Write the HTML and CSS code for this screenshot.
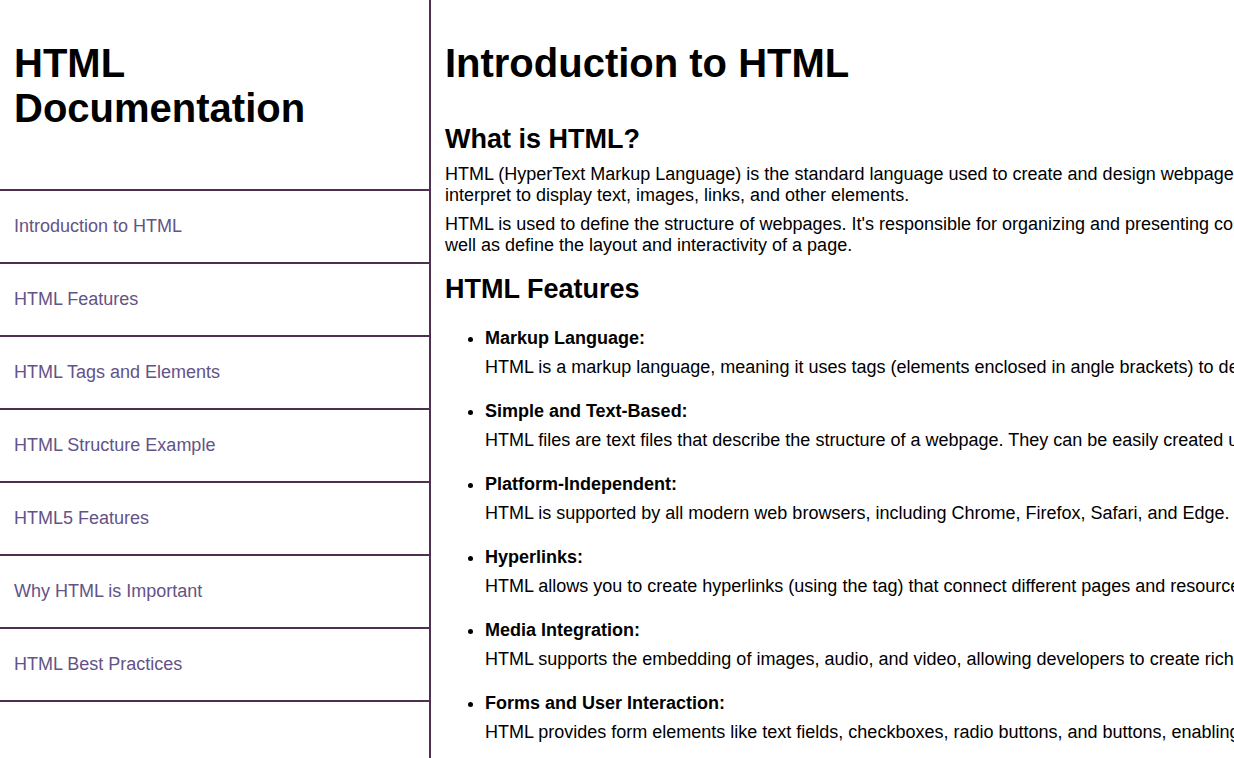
FILE: index.html
```html
<!DOCTYPE html>
<html lang="en">
<head>
<meta charset="utf-8">
<title>HTML Documentation</title>
<link rel="stylesheet" href="styles.css">
</head>
<body>
<div class="layout">
<nav class="sidebar">
<h1 class="brand">HTML Documentation</h1>
<a class="nav-link" href="#introduction">Introduction to HTML</a>
<a class="nav-link" href="#features">HTML Features</a>
<a class="nav-link" href="#tags">HTML Tags and Elements</a>
<a class="nav-link" href="#structure">HTML Structure Example</a>
<a class="nav-link" href="#html5">HTML5 Features</a>
<a class="nav-link" href="#importance">Why HTML is Important</a>
<a class="nav-link" href="#practices">HTML Best Practices</a>
</nav>
<main class="content">
<section class="doc" id="introduction">
<h1 class="title">Introduction to HTML</h1>
<h2 class="heading">What is HTML?</h2>
<p class="text">HTML (HyperText Markup Language) is the standard language used to create and design webpages that browsers<br>interpret to display text, images, links, and other elements.</p>
<p class="text">HTML is used to define the structure of webpages. It's responsible for organizing and presenting content, as<br>well as define the layout and interactivity of a page.</p>
<h2 class="heading" id="features">HTML Features</h2>
<ul class="features">
<li class="feature"><strong>Markup Language:</strong><p class="text">HTML is a markup language, meaning it uses tags (elements enclosed in angle brackets) to define content.</p></li>
<li class="feature"><strong>Simple and Text-Based:</strong><p class="text">HTML files are text files that describe the structure of a webpage. They can be easily created using any text editor.</p></li>
<li class="feature"><strong>Platform-Independent:</strong><p class="text">HTML is supported by all modern web browsers, including Chrome, Firefox, Safari, and Edge.</p></li>
<li class="feature"><strong>Hyperlinks:</strong><p class="text">HTML allows you to create hyperlinks (using the tag) that connect different pages and resources.</p></li>
<li class="feature"><strong>Media Integration:</strong><p class="text">HTML supports the embedding of images, audio, and video, allowing developers to create rich content.</p></li>
<li class="feature"><strong>Forms and User Interaction:</strong><p class="text">HTML provides form elements like text fields, checkboxes, radio buttons, and buttons, enabling user input.</p></li>
</ul>
</section>
</main>
</div>
</body>
</html>
```
FILE: styles.css
```css
* {
  box-sizing: border-box;
}

body {
  margin: 0;
  background: #ffffff;
  color: #000000;
  font-family: "Liberation Sans", Arial, sans-serif;
  font-size: 18px;
  line-height: 21px;
}

.layout {
  display: grid;
  grid-template-columns: 34.92% 1fr;
  height: 100vh;
  overflow: hidden;
}

.sidebar {
  border-right: 2px solid #4f2f4f;
}

.brand {
  margin: 0;
  padding: 41px 14px 58px;
  border-bottom: 2px solid #4f2f4f;
  font-size: 40px;
  line-height: 45px;
}

.nav-link {
  display: block;
  padding: 25px 14px;
  border-bottom: 2px solid #4f2f4f;
  color: #635387;
  text-decoration: none;
}

.content {
  min-width: 0;
  padding: 41px 14px 0;
  overflow: hidden;
  white-space: nowrap;
}

.title {
  margin: 0 0 38px;
  font-size: 40px;
  line-height: 45px;
}

.heading {
  margin: 18px 0 9px;
  font-size: 27px;
  line-height: 31px;
}

.text {
  margin: 8px 0;
}

.features {
  margin: 23px 0 0;
  padding-left: 40px;
}

.feature {
  margin-bottom: 23px;
}
```
